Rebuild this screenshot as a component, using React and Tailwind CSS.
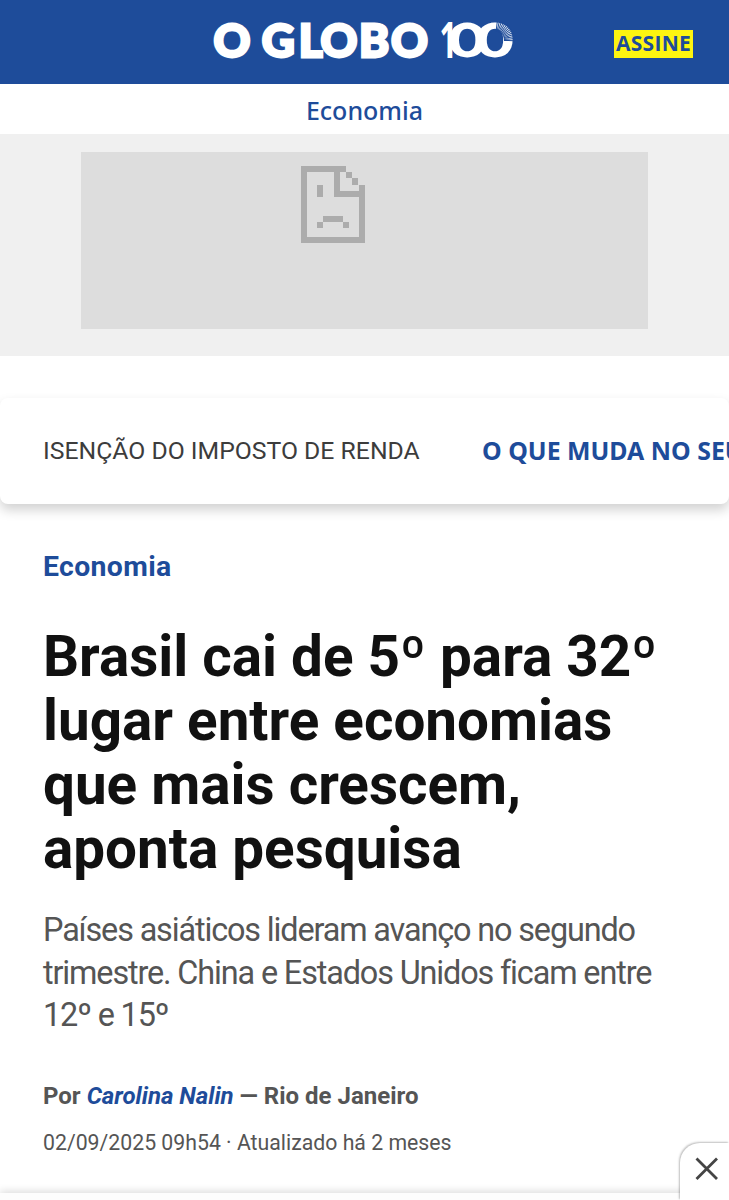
const rays = Array.from({ length: 15 }, (_, i) => -83 + i * 6);

function GloboLogo() {
  return (
    <svg
      width="300"
      height="40"
      viewBox="213 20 300 40"
      role="img"
      aria-label="O Globo 100"
      className="overflow-visible font-['Lato',sans-serif] text-[45.5px] font-black"
    >
      <g fill="#fff" stroke="#fff" strokeWidth="2.8">
        <text y="56.6">
          <tspan x="213.5">O</tspan>
          <tspan x="261.8">G</tspan>
          <tspan x="298.8">L</tspan>
          <tspan x="320.5">O</tspan>
          <tspan x="359">B</tspan>
          <tspan x="391">O</tspan>
        </text>
      </g>
      {/* centenary mark, the zeros are stretched until they are round and touch */}
      <g fill="#fff">
        <text
          x="439.5"
          y="58"
          textLength="17.5"
          lengthAdjust="spacingAndGlyphs"
          className="font-['Noto_Sans',sans-serif] text-[49.5px] font-bold"
        >
          1
        </text>
        <g stroke="#fff" strokeWidth="2.8" className="text-[44.5px] font-normal">
          <text x="449.8" y="56.4" textLength="35" lengthAdjust="spacingAndGlyphs">
            0
          </text>
          <text x="477.4" y="56.4" textLength="35" lengthAdjust="spacingAndGlyphs">
            0
          </text>
        </g>
      </g>
      {/* the last zero fades out into rays */}
      <g stroke="#1e4c9a" strokeWidth="1">
        {rays.map((a) => (
          <line
            key={a}
            x1="504"
            y1="40.3"
            x2="514.5"
            y2="40.3"
            transform={`rotate(${a} 495 40.3)`}
          />
        ))}
      </g>
    </svg>
  );
}

function BrokenPage() {
  return (
    <svg
      width="64"
      height="77"
      viewBox="0 0 64 77"
      fill="#acacac"
      shapeRendering="crispEdges"
    >
      <path d="M0 0H45V6H39V25H58V19H64V77H0ZM6 6V71H58V31H33V6Z" fillRule="evenodd" />
      <rect x="45" y="6" width="6" height="6" />
      <rect x="51" y="12" width="6" height="7" />
      <rect x="16" y="19" width="6" height="12" />
      <rect x="22" y="50" width="20" height="6" />
      <rect x="16" y="56" width="6" height="6" />
      <rect x="42" y="56" width="6" height="6" />
    </svg>
  );
}

function Header() {
  return (
    <header className="grid h-[84px] shrink-0 grid-cols-[213px_300px_1fr] bg-[#1e4c9a]">
      <div />
      <div className="pt-5">
        <GloboLogo />
      </div>
      <div className="pt-[30px] pl-[101px]">
        <a className="flex h-7 w-[79px] items-center justify-center bg-[#fdf510] font-['Open_Sans',sans-serif] text-[21px] font-bold tracking-[0.3px] text-[#1e4c9a]">
          ASSINE
        </a>
      </div>
    </header>
  );
}

function HotTopics() {
  return (
    <nav className="mt-[42px] flex h-[106px] shrink-0 items-center overflow-visible rounded-lg bg-white pl-[43px] whitespace-nowrap shadow-[0_6px_12px_rgba(0,0,0,0.18)]">
      <span className="w-[439px] shrink-0 pb-px text-[24.75px] text-[#3c3c3c]">
        ISENÇÃO DO IMPOSTO DE RENDA
      </span>
      <span className="min-w-0 flex-1 overflow-hidden font-['Noto_Sans',sans-serif] text-[24.9px] font-bold text-[#1e4c9a]">
        O QUE MUDA NO SEU
      </span>
    </nav>
  );
}

function Article() {
  return (
    <article className="flex flex-col px-[43px] pt-[47px] text-[#555]">
      <a className="text-[28.4px] leading-8 font-bold tracking-[0.35px] text-[#1e4c9a]">
        Economia
      </a>
      <h1 className="mt-[42px] text-[56.6px] leading-16 font-bold whitespace-nowrap text-[#111]">
        Brasil cai de 5º para 32º
        <br />
        lugar entre economias
        <br />
        que mais crescem,
        <br />
        aponta pesquisa
      </h1>
      <h2 className="mt-7 text-[32.4px] leading-[42.5px] tracking-[-1.13px] whitespace-nowrap">
        Países asiáticos lideram avanço no segundo
        <br />
        trimestre. China e Estados Unidos ficam entre
        <br />
        12º e 15º
      </h2>
      <p className="mt-[43px] text-[24px] leading-8 font-bold whitespace-nowrap">
        Por <em className="text-[#1e4c9a]">Carolina Nalin</em> — Rio de Janeiro
      </p>
      <p className="mt-[15px] text-[21.25px] leading-8 whitespace-nowrap">
        02/09/2025 09h54 · Atualizado há 2 meses
      </p>
    </article>
  );
}

function BottomSheet() {
  return (
    <div className="absolute inset-x-0 bottom-0 h-[58px]">
      <div className="absolute inset-x-0 bottom-0 h-[7px] bg-[#fdfdfd] shadow-[0_-1px_8px_rgba(0,0,0,0.18)]" />
      <button
        aria-label="Fechar"
        className="absolute right-0 bottom-0 flex h-[57px] w-[49px] justify-center rounded-tl-[20px] bg-white pt-[14px] pl-[5px] shadow-[-1px_-1px_2px_rgba(0,0,0,0.25)]"
      >
        <svg width="24" height="24" viewBox="0 0 24 24" stroke="#444" strokeWidth="2.8">
          <path d="M1.5 1.5L22 22M22 1.5L1.5 22" />
        </svg>
      </button>
    </div>
  );
}

export default function App() {
  return (
    <div className="relative flex h-[1200px] w-[729px] flex-col overflow-hidden bg-white font-['Roboto',sans-serif]">
      <Header />
      <div className="flex h-[50px] shrink-0 items-center justify-center bg-white pt-[3px] font-['Noto_Sans',sans-serif] text-[25px] font-medium text-[#1e4c9a]">
        Economia
      </div>
      <div className="h-[222px] shrink-0 bg-[#f0f0f0] px-[81px] pt-[18px]">
        <div className="h-[177px] bg-[#dddddd] pt-[14px] pl-[220px]">
          <BrokenPage />
        </div>
      </div>
      <HotTopics />
      <Article />
      <BottomSheet />
    </div>
  );
}
